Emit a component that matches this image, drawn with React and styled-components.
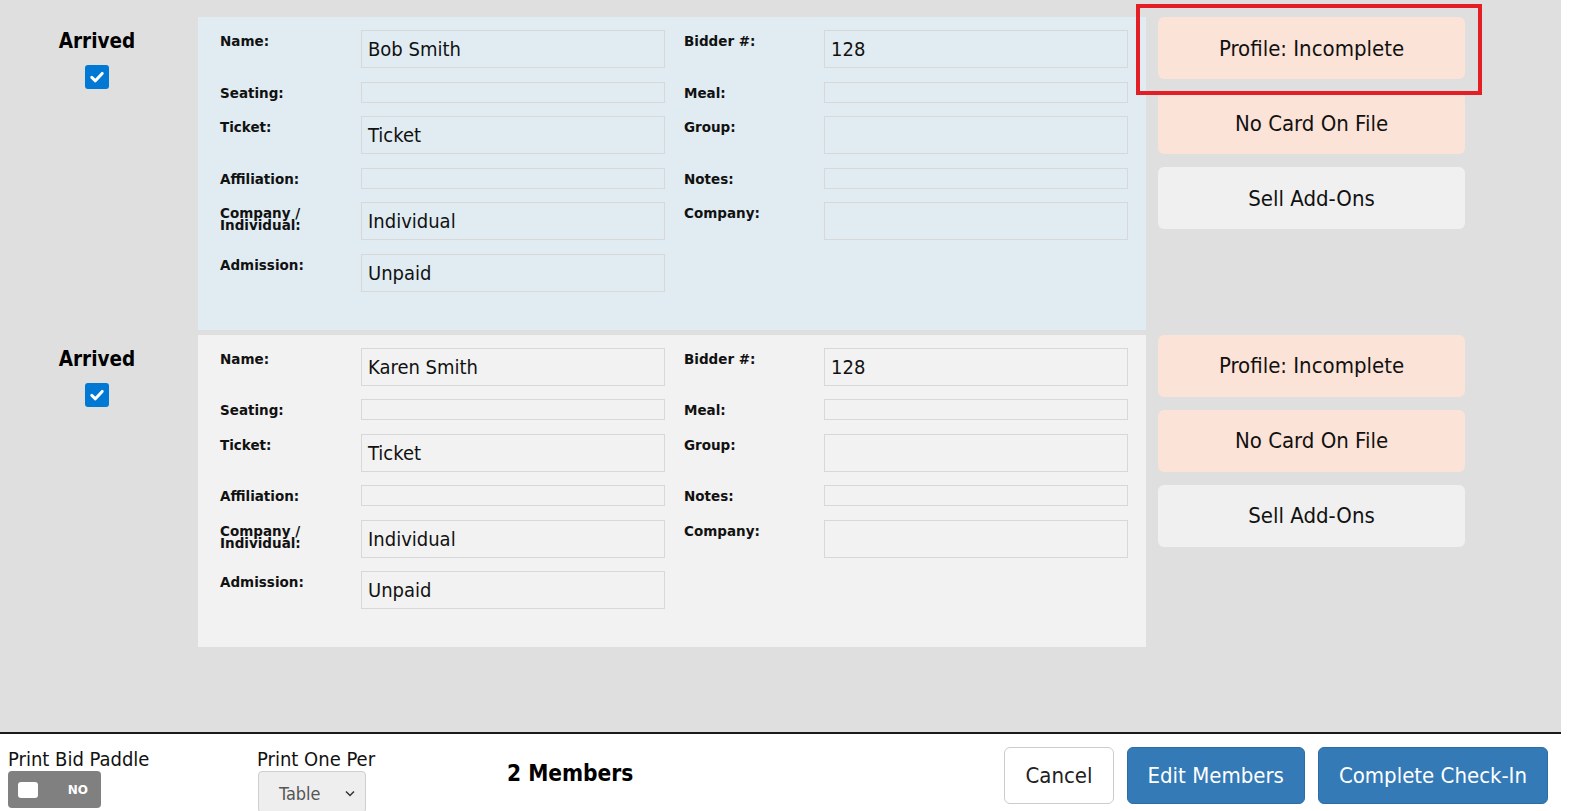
import React, { useState } from 'react';
import styled, { createGlobalStyle } from 'styled-components';

const GlobalStyle = createGlobalStyle`
  html, body {
    margin: 0;
    padding: 0;
    background: #ffffff;
  }
  body {
    font-family: "DejaVu Sans Condensed", "DejaVu Sans", sans-serif;
    color: #111;
  }
  * { box-sizing: border-box; }
`;

const members = [
  {
    id: 1,
    tint: '#e0ecf2',
    highlight: true,
    left: [
      ['Name:', 'Bob Smith'],
      ['Seating:', ''],
      ['Ticket:', 'Ticket'],
      ['Affiliation:', ''],
      ['Company / Individual:', 'Individual'],
      ['Admission:', 'Unpaid'],
    ],
    right: [
      ['Bidder #:', '128'],
      ['Meal:', ''],
      ['Group:', ''],
      ['Notes:', ''],
      ['Company:', ''],
    ],
  },
  {
    id: 2,
    tint: '#f2f2f2',
    highlight: false,
    left: [
      ['Name:', 'Karen Smith'],
      ['Seating:', ''],
      ['Ticket:', 'Ticket'],
      ['Affiliation:', ''],
      ['Company / Individual:', 'Individual'],
      ['Admission:', 'Unpaid'],
    ],
    right: [
      ['Bidder #:', '128'],
      ['Meal:', ''],
      ['Group:', ''],
      ['Notes:', ''],
      ['Company:', ''],
    ],
  },
];

const Check = () => (
  <svg width="16" height="16" viewBox="0 0 16 16">
    <path d="M2.8 8.4 L6.4 11.8 L13.2 4.4" fill="none" stroke="#fff" strokeWidth="3" strokeLinecap="round" strokeLinejoin="round" />
  </svg>
);

const Chevron = () => (
  <svg width="10" height="7" viewBox="0 0 10 7">
    <path d="M1 1.5 L5 5.5 L9 1.5" fill="none" stroke="#333" strokeWidth="1.5" />
  </svg>
);

const MemberRow = ({ member }) => {
  const rows = member.left.map((l, i) => [l, member.right[i]]);
  return (
    <Row>
      <ArrivedCol>
        <ArrivedLabel>Arrived</ArrivedLabel>
        <CheckBox><Check /></CheckBox>
      </ArrivedCol>
      <Card $bg={member.tint}>
        <FieldGrid>
          {rows.map(([l, r], i) => (
            <React.Fragment key={i}>
              <Label>{l[0]}</Label>
              <Value>{l[1]}</Value>
              {r ? <Label $second>{r[0]}</Label> : <span />}
              {r ? <Value>{r[1]}</Value> : <span />}
            </React.Fragment>
          ))}
        </FieldGrid>
      </Card>
      <Actions>
        <ActionButton $tone="warn" $marked={member.highlight}>Profile: Incomplete</ActionButton>
        <ActionButton $tone="warn">No Card On File</ActionButton>
        <ActionButton>Sell Add-Ons</ActionButton>
      </Actions>
    </Row>
  );
};

const App = () => {
  const [paddle] = useState(false);
  return (
    <>
      <GlobalStyle />
      <Page>
        <Main>
          {members.map((m) => (
            <MemberRow key={m.id} member={m} />
          ))}
        </Main>
        <Footer>
          <FooterGroup $width="249px">
            <FooterLabel>Print Bid Paddle</FooterLabel>
            <Toggle>
              <Knob />
              <ToggleText>{paddle ? 'YES' : 'NO'}</ToggleText>
            </Toggle>
          </FooterGroup>
          <FooterGroup $width="250px">
            <FooterLabel>Print One Per</FooterLabel>
            <SelectBox>
              <span>Table</span>
              <Chevron />
            </SelectBox>
          </FooterGroup>
          <MemberCount>2 Members</MemberCount>
          <FooterButtons>
            <FooterButton>Cancel</FooterButton>
            <FooterButton $primary>Edit Members</FooterButton>
            <FooterButton $primary>Complete Check-In</FooterButton>
          </FooterButtons>
        </Footer>
      </Page>
    </>
  );
};

export default App;

const Page = styled.div`
  width: calc(100% - 12px);
  height: 811px;
  display: flex;
  flex-direction: column;
  overflow: hidden;
`;

const Main = styled.div`
  flex: 1;
  background: #dfdfdf;
  padding-top: 17px;
  display: flex;
  flex-direction: column;
  gap: 5px;
`;

const Row = styled.div`
  display: flex;
  align-items: flex-start;
`;

const ArrivedCol = styled.div`
  flex: none;
  width: 198px;
  display: flex;
  flex-direction: column;
  align-items: center;
  padding-top: 12px;
  padding-right: 4px;
`;

const ArrivedLabel = styled.div`
  font-weight: bold;
  font-size: 20.5px;
  line-height: 24px;
  color: #000;
`;

const CheckBox = styled.div`
  width: 24px;
  height: 24px;
  margin-top: 12px;
  border-radius: 3px;
  background: #0078d4;
  display: flex;
  align-items: center;
  justify-content: center;
`;

const Card = styled.div`
  flex: none;
  width: 948px;
  background: ${(p) => p.$bg};
  padding: 13px 18px 38px 22px;
`;

const FieldGrid = styled.div`
  display: grid;
  grid-template-columns: 141px 304px 159px 304px;
  row-gap: 13.5px;
`;

const Label = styled.div`
  font-family: "DejaVu Sans", Verdana, sans-serif;
  font-weight: bold;
  font-size: 13.5px;
  line-height: 12px;
  padding-top: 5px;
  padding-right: 8px;
  padding-left: ${(p) => (p.$second ? '19px' : '0')};
  color: #111;
`;

const Value = styled.div`
  border: 1px solid #d8d8d8;
  padding: 9px 6px 8px;
  font-size: 20px;
  line-height: 19px;
  min-height: 21px;
  color: #111;
`;

const Actions = styled.div`
  flex: none;
  width: 307px;
  margin-left: 12px;
  display: flex;
  flex-direction: column;
  gap: 13px;
`;

const ActionButton = styled.button`
  position: relative;
  height: 62px;
  border: none;
  border-radius: 6px;
  background: ${(p) => (p.$tone === 'warn' ? '#fce3d7' : '#f0f0f0')};
  font-family: inherit;
  font-size: 22px;
  color: #111;
  cursor: pointer;

  &::after {
    content: '';
    display: ${(p) => (p.$marked ? 'block' : 'none')};
    position: absolute;
    left: -22px;
    top: -13px;
    right: -17px;
    bottom: -16px;
    border: 4px solid #e41e25;
    pointer-events: none;
    z-index: 2;
  }
`;

const Footer = styled.div`
  height: 79px;
  flex-shrink: 0;
  background: #fff;
  border-top: 2px solid #1a1a1a;
  display: flex;
  align-items: flex-start;
  padding: 13px 13px 0 8px;
`;

const FooterGroup = styled.div`
  width: ${(p) => p.$width};
  display: flex;
  flex-direction: column;
  align-items: flex-start;
`;

const FooterLabel = styled.div`
  font-size: 20px;
  line-height: 24px;
  color: #111;
`;

const Toggle = styled.div`
  width: 93px;
  height: 37px;
  border-radius: 4px;
  background: #808080;
  display: flex;
  align-items: center;
  padding: 0 13px 0 10px;
  justify-content: space-between;
`;

const Knob = styled.div`
  width: 20px;
  height: 16px;
  border-radius: 3px;
  background: #fff;
`;

const ToggleText = styled.span`
  font-family: "DejaVu Sans", Verdana, sans-serif;
  font-weight: bold;
  font-size: 12px;
  color: #fff;
`;

const SelectBox = styled.div`
  width: 108px;
  height: 42px;
  margin-left: 1px;
  border: 1px solid #cfcfcf;
  border-radius: 4px;
  background: #eeeeee;
  display: flex;
  align-items: center;
  justify-content: space-between;
  padding: 2px 10px 0 20px;
  font-size: 18px;
  color: #555;
`;

const MemberCount = styled.div`
  font-weight: bold;
  font-size: 22.5px;
  line-height: 26px;
  margin-top: 13px;
  color: #000;
`;

const FooterButtons = styled.div`
  margin-left: auto;
  display: flex;
  gap: 13px;
`;

const FooterButton = styled.button`
  height: 57px;
  padding: 0 20px;
  border-radius: 6px;
  border: 1px solid ${(p) => (p.$primary ? '#2e6da4' : '#cccccc')};
  background: ${(p) => (p.$primary ? '#337ab7' : '#ffffff')};
  color: ${(p) => (p.$primary ? '#ffffff' : '#222')};
  font-family: inherit;
  font-size: 22px;
  cursor: pointer;
`;
